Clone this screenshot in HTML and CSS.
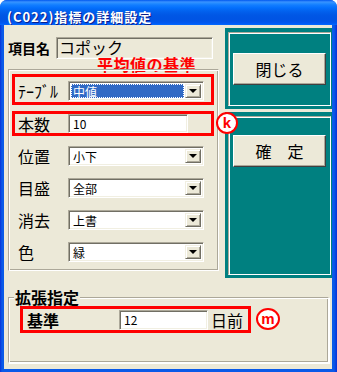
FILE: index.html
```html
<!DOCTYPE html>
<html lang="ja">
<head>
  <meta charset="UTF-8">
  <title>(C022)指標の詳細設定</title>
  <link rel="stylesheet" href="styles.css">
</head>
<body>
  <div class="window">
    <div class="titlebar">(C022)指標の詳細設定</div>
    <div class="frame">
      <div class="client">
        <div class="top">
          <div class="left">
            <div class="item-row">
              <span class="item-label">項目名</span>
              <div class="readonly sunken">コポック</div>
            </div>
            <div class="note">平均値の基準</div>
            <div class="group etched">
              <div class="row mark mark-table">
                <span class="label">ﾃｰﾌﾞﾙ</span>
                <div class="combo sunken">
                  <span class="value selected">中値</span>
                  <span class="drop"><i class="tri"></i></span>
                </div>
              </div>
              <div class="row mark mark-count">
                <span class="label">本数</span>
                <div class="textbox sunken">10</div>
                <span class="badge badge-k">k</span>
              </div>
              <div class="row plain first">
                <span class="label">位置</span>
                <div class="combo sunken">
                  <span class="value">小下</span>
                  <span class="drop"><i class="tri"></i></span>
                </div>
              </div>
              <div class="row plain">
                <span class="label">目盛</span>
                <div class="combo sunken">
                  <span class="value">全部</span>
                  <span class="drop"><i class="tri"></i></span>
                </div>
              </div>
              <div class="row plain">
                <span class="label">消去</span>
                <div class="combo sunken">
                  <span class="value">上書</span>
                  <span class="drop"><i class="tri"></i></span>
                </div>
              </div>
              <div class="row plain">
                <span class="label">色</span>
                <div class="combo sunken">
                  <span class="value">緑</span>
                  <span class="drop"><i class="tri"></i></span>
                </div>
              </div>
            </div>
          </div>
          <div class="side">
            <div class="panel panel-close">
              <div class="panel-inner">
                <button class="btn">閉じる</button>
              </div>
            </div>
            <div class="panel panel-ok">
              <div class="panel-inner">
                <button class="btn">確　定</button>
              </div>
            </div>
          </div>
        </div>
        <fieldset class="ext">
          <legend>拡張指定</legend>
          <div class="row mark mark-base">
            <span class="label strong">基準</span>
            <div class="textbox sunken">12</div>
            <span class="unit">日前</span>
            <span class="badge badge-m">m</span>
          </div>
        </fieldset>
      </div>
    </div>
  </div>
</body>
</html>
```

FILE: styles.css
```css
* {
  box-sizing: border-box;
}

html,
body {
  margin: 0;
  padding: 0;
}

body {
  width: 337px;
  height: 372px;
  font-family: "Noto Sans CJK JP", "Liberation Sans", sans-serif;
  background: #ffffff;
  color: #000000;
}

/* window chrome */
.window {
  width: 337px;
  height: 372px;
  display: flex;
  flex-direction: column;
  border-radius: 7px 7px 0 0;
  overflow: hidden;
  background: #0a4fe0;
}

.titlebar {
  height: 25px;
  padding: 8px 0 0 7px;
  line-height: 17px;
  font-size: 13px;
  font-weight: bold;
  letter-spacing: 1px;
  color: #ffffff;
  text-shadow: 1px 1px 0 #0a1e8c;
  background: linear-gradient(to bottom, #0058ee 0%, #3a93ff 8%, #288eff 12%, #127dff 20%, #036ffc 32%, #0262ee 44%, #0057e5 60%, #0054e3 76%, #0055eb 88%, #005bf5 94%, #026afe 100%);
}

.frame {
  flex: 1;
  padding: 0 5px 3px 4px;
  background: linear-gradient(to right, #0831d9 0, #0a5ae8 2px, #0a5ae8 calc(100% - 3px), #0831d9 100%);
}

.client {
  height: 344px;
  display: flex;
  flex-direction: column;
  background: #ece9d8;
}

.top {
  display: flex;
  align-items: flex-start;
  gap: 6px;
  padding-left: 4px;
}

/* shared control looks */
.sunken {
  border: 1px solid;
  border-color: #aca899 #ffffff #ffffff #aca899;
  box-shadow: inset 1px 1px 0 #716f64, inset -1px -1px 0 #f1efe2;
}

.etched {
  border: 1px solid;
  border-color: #aca899 #ffffff #ffffff #aca899;
  box-shadow: inset 1px 1px 0 #ffffff, inset -1px -1px 0 #aca899;
}

/* left column */
.left {
  width: 211px;
  display: flex;
  flex-direction: column;
}

.item-row {
  margin-top: 12px;
  height: 22px;
  display: flex;
  align-items: center;
}

.item-label {
  width: 48px;
  font-size: 14px;
  font-weight: bold;
  line-height: 16px;
}

.readonly {
  width: 157px;
  height: 22px;
  padding-left: 2px;
  font-size: 16px;
  line-height: 18px;
  background: #ece9d8;
}

.note {
  margin-top: -2px;
  height: 15px;
  padding-left: 89px;
  font-size: 16px;
  font-weight: bold;
  line-height: 15px;
  letter-spacing: 0.5px;
  color: #ff0000;
}

.group {
  margin-top: -3px;
  height: 202px;
  padding: 4px 0 0 3px;
}

.row {
  display: flex;
  align-items: center;
}

.label {
  width: 50px;
  font-size: 16px;
  line-height: 18px;
  white-space: nowrap;
}

.mark {
  position: relative;
  border: 3px solid #ff0000;
}

.mark-table {
  width: 202px;
  height: 31px;
  padding: 3px 0 0 3px;
}

.mark-count {
  width: 202px;
  height: 25px;
  margin-top: 6px;
  padding-left: 3px;
}

.plain {
  height: 20px;
  margin-top: 12px;
  padding-left: 6px;
}

.plain.first {
  margin-top: 10px;
}

.combo {
  width: 136px;
  height: 20px;
  display: flex;
  align-items: stretch;
  padding: 2px;
  background: #ffffff;
}

.value {
  flex: 1;
  padding-left: 2px;
  font-size: 12px;
  line-height: 16px;
}

.value.selected {
  margin-right: 1px;
  color: #ffffff;
  background: #316ac5;
  outline: 1px dotted #ffffff;
  outline-offset: -1px;
}

.drop {
  width: 16px;
  display: flex;
  align-items: center;
  justify-content: center;
  border: 1px solid;
  border-color: #f1efe2 #716f64 #716f64 #f1efe2;
  box-shadow: inset 1px 1px 0 #ffffff, inset -1px -1px 0 #aca899;
  background: #ece9d8;
}

.tri {
  width: 0;
  height: 0;
  border-left: 4px solid transparent;
  border-right: 4px solid transparent;
  border-top: 4px solid #000000;
}

.textbox {
  height: 19px;
  padding: 0 0 0 4px;
  font-size: 12px;
  line-height: 17px;
  background: #ffffff;
}

.mark-count .textbox {
  width: 120px;
}

/* circled annotation letters */
.badge {
  position: absolute;
  width: 22px;
  height: 22px;
  border: 2px solid #ff0000;
  border-radius: 50%;
  background: #ffffff;
  color: #ff0000;
  font-family: "Liberation Sans", sans-serif;
  font-size: 15px;
  font-weight: bold;
  line-height: 17px;
  text-align: center;
}

.badge-k {
  left: 201px;
  top: -2px;
}

.badge-m {
  left: 233px;
  top: -1px;
  width: 24px;
}

/* right column */
.side {
  width: 107px;
  display: flex;
  flex-direction: column;
  gap: 3px;
  margin-top: 3px;
}

.panel {
  padding: 4px 1px 3px 3px;
  background: #008080;
  display: flex;
}

.panel-close {
  height: 81px;
}

.panel-ok {
  height: 166px;
}

.panel-inner {
  flex: 1;
  display: flex;
  justify-content: center;
  border: 1px solid;
  border-color: #aca899 #ffffff #ffffff #aca899;
  box-shadow: inset 1px 1px 0 #ffffff;
}

.panel-close .panel-inner {
  align-items: center;
}

.panel-ok .panel-inner {
  align-items: flex-start;
  padding-top: 18px;
}

.btn {
  width: 93px;
  height: 32px;
  padding: 0;
  font-family: "Noto Sans CJK JP", sans-serif;
  font-size: 16px;
  color: #000000;
  background: #ece9d8;
  border: 1px solid;
  border-color: #ffffff #404040 #404040 #ffffff;
  box-shadow: inset -1px -1px 0 #aca899;
}

/* extended settings */
.ext {
  height: 75px;
  margin: 10px 3px 0 4px;
  padding: 0;
  min-width: 0;
  border: 1px solid;
  border-color: #aca899 #ffffff #ffffff #aca899;
  box-shadow: inset 1px 1px 0 #ffffff, inset -1px -1px 0 #aca899, 1px 1px 0 #ffffff;
}

.ext legend {
  margin-left: 5px;
  padding: 0 1px;
  font-size: 16px;
  font-weight: bold;
  line-height: 18px;
  background: #ece9d8;
}

.mark-base {
  width: 231px;
  height: 27px;
  margin-left: 11px;
  padding-left: 4px;
}

.label.strong {
  width: 92px;
  font-weight: bold;
}

.mark-base .textbox {
  width: 89px;
  height: 20px;
  line-height: 18px;
}

.unit {
  margin-left: 3px;
  font-size: 16px;
  line-height: 18px;
}
```
